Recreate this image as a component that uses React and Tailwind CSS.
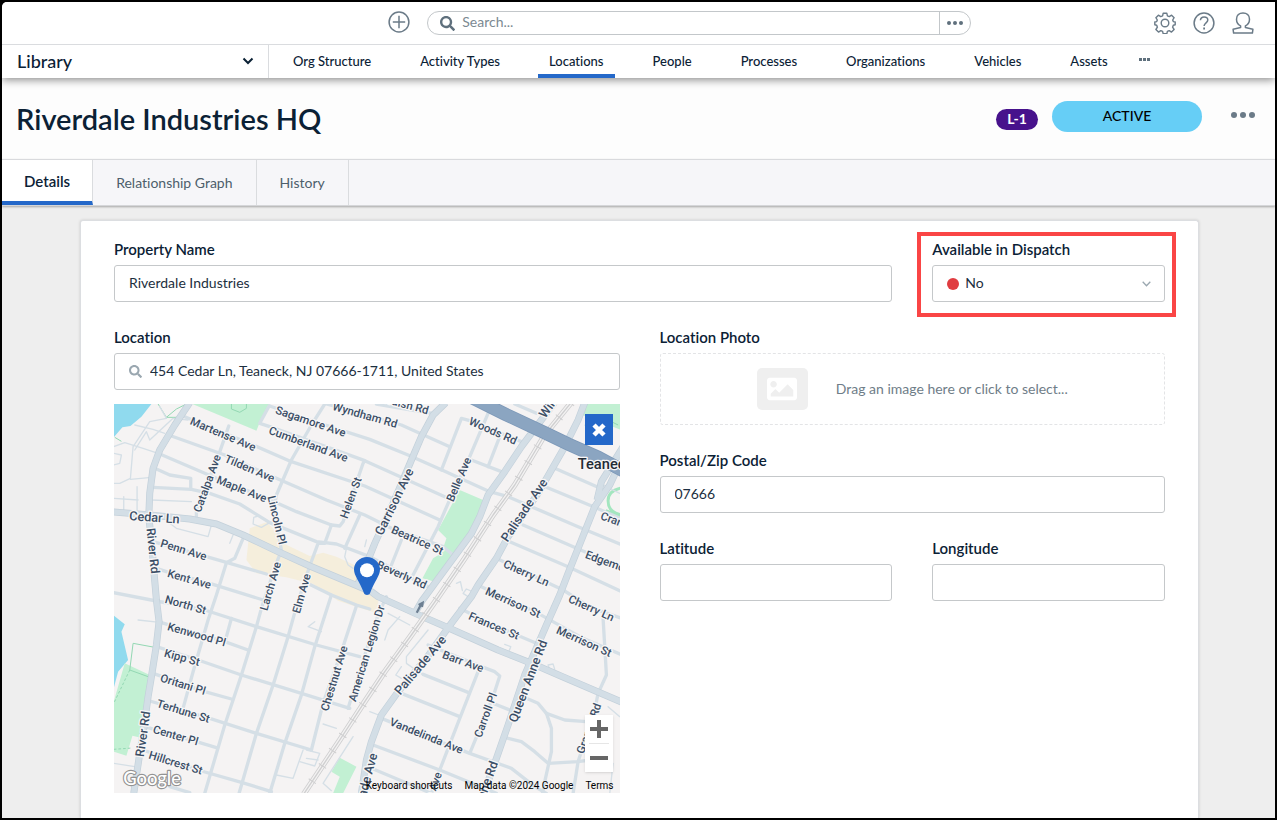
import { FaSearch, FaImage } from "react-icons/fa";

const NAV = [
  "Org Structure",
  "Activity Types",
  "Locations",
  "People",
  "Processes",
  "Organizations",
  "Vehicles",
  "Assets",
];

/* ---------- icons ---------- */

function PlusCircle() {
  return (
    <svg viewBox="0 0 22 22" className="size-[22px]" fill="none" stroke="currentColor" strokeWidth="1.5">
      <circle cx="11" cy="11" r="9.9" />
      <path d="M11 4.8v12.4M4.8 11h12.4" />
    </svg>
  );
}

function Gear() {
  return (
    <svg viewBox="0 0 22 22" className="size-[22px]" fill="none" stroke="currentColor" strokeWidth="1.4" strokeLinejoin="round">
      <circle cx="11" cy="11" r="3.8" />
      <path d="M9.2 1.2h3.6l.6 2.6 1.9.8 2.3-1.4 2.5 2.5-1.4 2.3.6 1.6 1.9.4v2.8l-1.9.5-.7 1.9 1.5 2.3-2.6 2.6-2.3-1.5-1.8.8-.6 2.4H9.2l-.6-2.4-1.8-.8-2.3 1.5-2.6-2.6 1.5-2.3-.7-1.9-1.9-.5V10l1.9-.4.6-1.6-1.4-2.3 2.5-2.5 2.3 1.4 1.9-.8z" />
    </svg>
  );
}

function Help() {
  return (
    <svg viewBox="0 0 22 22" className="size-[22px]" fill="none" stroke="currentColor" strokeWidth="1.5">
      <circle cx="11" cy="11" r="9.9" />
      <path d="M7.4 8.2c.2-2 1.700-3.200 3.700-3.200 2.100 0 3.700 1.300 3.700 3.100 0 2.700-3.700 2.900-3.700 6" />
      <path d="M11.1 15.5v2" strokeWidth="1.8" />
    </svg>
  );
}

function Person() {
  return (
    <svg viewBox="0 0 22 22" className="size-[22px]" fill="none" stroke="currentColor" strokeWidth="1.5" strokeLinejoin="round">
      <path d="M8.6 13.9C5.9 12.5 4.5 10 4.5 7.2 4.5 3.5 7.2.9 11 .9s6.5 2.6 6.5 6.3c0 2.8-1.4 5.3-4.1 6.7v1.7l7.500 1.700-.5 3.800H1.600l-.5-3.800 7.500-1.700z" />
    </svg>
  );
}

function Dots({ className }) {
  return (
    <svg viewBox="0 0 24 6" className={className} fill="currentColor">
      <circle cx="3" cy="3" r="3" />
      <circle cx="12" cy="3" r="3" />
      <circle cx="21" cy="3" r="3" />
    </svg>
  );
}

function Pin() {
  return (
    <svg viewBox="0 0 26 38" className="h-[38px] w-[26px]">
      <path
        fill="#2468c9"
        d="M13 0C5.8 0 0 5.6 0 12.6 0 19 5.5 24 10 36.3c.8 2.2 5.2 2.2 6 0C20.5 24 26 19 26 12.6 26 5.6 20.2 0 13 0z"
      />
      <circle cx="13" cy="13.2" r="7" fill="#fff" />
    </svg>
  );
}

/* ---------- map data (three drawing units per pixel) ---------- */

const MINOR = [
  "225,50 430,135 545,185 765,258 990,360",
  "480,18 600,60 780,118 895,165 1005,214 1140,275 1195,290 1265,320 1405,380 1530,432",
  "478,18 450,70 480,80 705,160 765,182 1005,290",
  "185,108 345,165 500,235 650,300 765,345 845,385 1000,440 1030,465",
  "145,160 320,235 470,295 560,335 665,375 690,378 700,365 760,190 765,182",
  "135,205 180,225 243,235 243,268",
  "130,262 245,268 300,280 390,312 480,368 620,425 680,432 780,470 955,560",
  "357,78 325,170 260,330 260,350",
  "645,12 605,75 545,180 500,285 492,330 515,450 500,490 455,625 440,680 395,825 345,975 285,1180",
  "665,375 645,430 625,430 600,498 560,620 535,710 490,855 440,1000 388,1180",
  "750,345 705,445",
  "400,415 375,475 350,488 320,585 295,660 250,815 220,925",
  "130,425 290,470 350,487 470,522",
  "140,505 170,515 300,550 470,603",
  "12,578 140,603 285,630 440,680 620,735 750,770",
  "145,665 345,725 415,750",
  "365,655 345,728",
  "140,740 265,780 395,825 575,880 720,925",
  "130,820 285,875 365,897",
  "120,903 300,955 440,1000 605,1050",
  "105,980 260,1025 320,1043",
  "100,1050 275,1113 395,1147 485,1175",
  "180,1160 240,1178",
  "590,548 665,585 740,615 780,627",
  "665,585 615,740 575,885 525,1030 480,1180",
  "740,618 690,770 640,910 605,1050",
  "830,590 805,645 770,750 715,925",
  "1135,40 1080,170 1015,310 985,380 910,525",
  "995,210 1055,55 1080,62 1235,125",
  "1170,110 1135,200",
  "1085,180 1175,215",
  "650,12 700,25 875,75 1020,140",
  "800,12 950,38 975,40",
  "875,420 845,495",
  "1215,12 1280,40",
  "1335,205 1465,262",
  "1310,262 1455,322 1530,355",
  "1240,375 1425,455 1530,500",
  "1200,425 1375,500 1530,572",
  "1160,475 1360,570 1442,622 1530,653",
  "1110,558 1285,640 1420,715 1530,762",
  "1050,625 1150,675 1285,732",
  "955,735 1115,800 1155,815 1170,828 1150,890",
  "1150,890 1080,1060",
  "1105,815 1050,955 990,1110 965,1180",
  "940,823 1075,877",
  "875,880 1050,950",
  "815,955 1080,1060 1205,1105 1275,1160 1310,1180",
  "790,1035 990,1110 1160,1180",
  "785,1105 960,1178",
  "1155,912 1205,932",
  "1250,895 1285,910 1310,940 1365,960 1430,965",
  "1310,940 1325,985 1325,1055 1305,1145 1298,1180",
  "1195,1015 1235,1025 1275,1055 1315,1090 1405,1085 1440,1080",
  "1480,655 1490,825 1465,880 1455,930 1405,1085 1390,1180",
];

const THIN = [
  "12,140 45,128 100,145 145,160",
  "150,20 170,55 120,65 70,140 62,235 30,250 12,250",
  "12,160 35,165 30,190 12,195",
  "75,75 130,88 165,100",
  "235,60 190,55 120,120 110,95 75,150",
  "42,290 42,330",
  "12,295 85,300",
  "82,260 82,330",
  "62,238 125,232",
  "125,300 245,305",
  "180,370 200,385 295,410 305,375",
  "370,405 360,430",
  "480,368 455,382 430,372 432,352 445,348",
  "710,445 705,470 715,495 730,505",
  "770,420 765,440",
  "85,660 150,667",
  "12,1090 75,1100",
  "615,665 595,680 635,695",
  "640,972 680,985",
  "580,1050 550,1135 500,1125",
  "570,1085 615,1098 630,1060 590,1050",
  "590,1075 625,1080",
  "730,1010 640,1150 665,1172",
  "1185,733 1203,740 1197,755",
  "1320,810 1315,795 1330,792 1335,808",
  "1088,575 1070,567 1060,580 1075,590",
  "1058,572 1052,545 1040,550",
  "955,690 890,770 890,790 940,825",
  "875,800 858,825 875,835",
  "780,935 815,948",
  "870,650 835,690 825,720",
  "835,640 900,675",
  "1470,250 1530,280",
  "1495,920 1530,950",
  "1510,1090 1500,1180",
];

const MAJOR = [
  "12,336 120,345 240,357 320,372 400,405 505,455 600,498 785,575 805,590 945,653 1015,683 1165,750 1265,790 1365,833 1540,908",
  "240,8 195,75 150,150 130,205 120,280 117,350 125,420 133,520 140,600 148,665 140,735 125,830 115,890 100,1000 90,1060 72,1180",
  "1008,8 970,45 935,110 905,180 850,310 795,430 775,480 742,558",
  "1334,8 1280,80 1235,140 1185,215 1135,285 1110,350 1085,400 1045,455 975,550 935,605 912,645",
  "1425,8 1405,60 1365,140 1325,210 1285,280 1195,410 1160,475 1105,555 1085,590 1015,683 950,775 865,875 815,945 785,1025 770,1080 755,1180",
  "1540,170 1500,255 1455,320 1415,420 1375,520 1350,585 1310,675 1245,825 1195,975 1160,1075 1120,1185",
  "1540,140 1475,245 1462,300",
];

const RAIL = "1384,8 1305,105 1215,255 1150,345 1065,475 985,592 905,705 825,815 765,905 690,1020 582,1182";
const HIGHWAY = "1085,-8 1185,42 1305,98 1375,132 1465,172 1540,212";

const LABELS = [
  [340, 102, 23, 34, "Martense Ave"],
  [603, 64, 19, 34, "Sagamore Ave"],
  [596, 132, 20, 34, "Cumberland Ave"],
  [766, 45, 16, 34, "Wyndham Rd"],
  [888, 13, 15, 34, "Walsh Rd"],
  [420, 205, 23, 34, "Tilden Ave"],
  [396, 267, 22, 34, "Maple Ave"],
  [292, 250, -70, 34, "Catalpa Ave"],
  [502, 360, 77, 34, "Lincoln Pl"],
  [723, 293, -70, 34, "Helen St"],
  [134, 352, 4, 38, "Cedar Ln"],
  [129, 452, 84, 37, "River Rd"],
  [222, 449, 17, 34, "Penn Ave"],
  [239, 537, 16, 34, "Kent Ave"],
  [228, 614, 16, 34, "North St"],
  [261, 703, 16, 34, "Kenwood Pl"],
  [217, 772, 15, 34, "Kipp St"],
  [220, 853, 17, 34, "Oritani Pl"],
  [221, 933, 17, 34, "Terhune St"],
  [198, 1006, 16, 34, "Center Pl"],
  [198, 1088, 17, 34, "Hillcrest St"],
  [100, 1002, -82, 37, "River Rd"],
  [482, 558, -74, 34, "Larch Ave"],
  [575, 580, -74, 34, "Elm Ave"],
  [673, 835, -73, 34, "Chestnut Ave"],
  [770, 760, -73, 34, "American Legion Dr"],
  [853, 305, -64, 38, "Garrison Ave"],
  [923, 420, 24, 34, "Beatrice St"],
  [876, 524, 24, 34, "Beverly Rd"],
  [1047, 238, -67, 34, "Belle Ave"],
  [1150, 92, 24, 34, "Woods Rd"],
  [1243, 330, -56, 38, "Palisade Ave"],
  [931, 795, -50, 38, "Palisade Ave"],
  [1254, 843, -69, 38, "Queen Anne Rd"],
  [1250, 519, 24, 34, "Cherry Ln"],
  [1445, 624, 24, 34, "Cherry Ln"],
  [1210, 607, 24, 34, "Merrison St"],
  [1423, 724, 24, 34, "Merrison St"],
  [1153, 677, 23, 34, "Frances St"],
  [1060, 784, 20, 34, "Barr Ave"],
  [950, 1007, 22, 34, "Vandelinda Ave"],
  [1127, 945, -70, 34, "Carroll Pl"],
  [1437, 985, -70, 34, "Grange Rd"],
  [1336, -8, -55, 38, "Windsor"],
  [1519, 495, 20, 34, "Edgemont Pl"],
  [1555, 375, 20, 34, "Cranford Pl"],
  [1108, 1207, -70, 38, "Queen Anne Rd"],
  [762, 1165, -75, 38, "Palisade Ave"],
  [965, 1175, -70, 34, "Elm Ave"],
];

function StreetMap() {
  return (
    <svg
      viewBox="12 12 1518 1167"
      preserveAspectRatio="xMidYMid slice"
      className="block h-[389px] w-full"
      role="img"
      aria-label="Street map"
    >
      <rect x="0" y="0" width="1560" height="1200" fill="#f5f3f3" />
      <g fill="#90daee">
        <path d="M12 12h113L95 50 62 78 38 82 12 112z" />
        <path d="M12 647l33 26-10 22 20 85-30 35-13 50z" />
      </g>
      <g fill="#c2f0d3">
        <path d="M248 12h230l-30 60-8 20z" />
        <path d="M1050 270l70 30-10 55-20 35-45 65-70 90-37-10 32-60 25-15 15-45-25-25z" />
        <path d="M1425 12h115v80l-130-50z" />
        <path d="M45 790l75 35-8 60-12 130-32-8-18 60-38-12V905z" />
        <path d="M690 1073l50 27-40 80h-30l20-50-25-15z" />
      </g>
      <path fill="#f5eedc" d="M420 385l50-18 25 23 25 40 80 38 40-10 40 12 60 28 45 72 22 18-4 52-60-18-58-20-75-50-80-20-90-12-30-40z" />
      <g fill="none" stroke="#93d8b3" strokeWidth="3">
        <path d="M145 12l25 40 40 0M170 52l30-25 30-15M15 112l20 12M60 810l10-80 65 12M60 810l55 20" />
        <path d="M365 12v15l25 10 20-12V12" />
        <path d="M1425 75l40-30 60 30" />
        <path strokeDasharray="8 6" d="M60 810L12 910M12 1048l55-4" />
      </g>
      <path fill="none" stroke="#a3e6bf" strokeWidth="9" d="M1545 262c-30 4-50 14-50 40 0 30 20 40 50 45M1488 332l50 20" />
      <g fill="none" stroke="#d5dfe6" strokeLinejoin="round" strokeLinecap="round">
        {THIN.map((p) => (
          <polyline key={p} points={p} strokeWidth="4" />
        ))}
        {MINOR.map((p) => (
          <polyline key={p} points={p} strokeWidth="10" />
        ))}
      </g>
      <g fill="none" strokeLinejoin="round">
        {MAJOR.map((p) => (
          <polyline key={p} points={p} stroke="#c3d0da" strokeWidth="21" />
        ))}
        {MAJOR.map((p) => (
          <polyline key={p} points={p} stroke="#d3dee6" strokeWidth="17" />
        ))}
      </g>
      <g fill="none" strokeLinejoin="round">
        <polyline points={RAIL} stroke="#cfcfd0" strokeWidth="17" />
        <polyline points={RAIL} stroke="#f3f2f2" strokeWidth="12" />
        <polyline points={RAIL} stroke="#cfcfd0" strokeWidth="4" />
        <polyline points={RAIL} stroke="#cfcfd0" strokeWidth="26" strokeDasharray="3 52" />
      </g>
      <polyline points={HIGHWAY} fill="none" stroke="#7c98b8" strokeWidth="40" />
      <polyline points={HIGHWAY} fill="none" stroke="#8ba5c1" strokeWidth="35" />
      <path fill="#6d7f92" d="M925 612l18-10-3 20-6-2-10 20-6-3 10-20z" />
      <g
        fill="#3b4e66"
        stroke="#f7f6f6"
        strokeWidth="8"
        strokeLinejoin="round"
        paintOrder="stroke"
        textAnchor="middle"
        dominantBaseline="central"
        className="font-['Roboto',sans-serif] font-medium"
      >
        {LABELS.map(([x, y, r, size, t], i) => (
          <text key={i} transform={`translate(${x} ${y}) rotate(${r})`} fontSize={size}>
            {t}
          </text>
        ))}
        <text x="1404" y="192" fontSize="44" fill="#232b35" textAnchor="start">
          Teaneck
        </text>
      </g>
      <text
        x="127"
        y="1156"
        fontSize="55"
        textAnchor="middle"
        fill="#fff"
        stroke="#939393"
        strokeWidth="7"
        paintOrder="stroke"
        strokeLinejoin="round"
        className="font-['Lato',sans-serif] font-medium"
      >
        Google
      </text>
    </svg>
  );
}

/* ---------- form pieces ---------- */

const LABEL = "block text-[15px] leading-5 font-semibold text-[#0b2135]";
const INPUT =
  "mt-[6px] block h-[37px] w-full rounded-[3px] border border-[#c5c8ca] bg-white px-[14px] pb-[2px] text-sm text-[#1c2f40] outline-none";

function TextField({ id, label, value, className = "" }) {
  return (
    <div className={className}>
      <label htmlFor={id} className={LABEL}>
        {label}
      </label>
      <input id={id} type="text" defaultValue={value} className={INPUT} />
    </div>
  );
}

function LocationField() {
  return (
    <div>
      <label htmlFor="location" className={LABEL}>
        Location
      </label>
      <div className="relative">
        <input
          id="location"
          type="text"
          defaultValue="454 Cedar Ln, Teaneck, NJ 07666-1711, United States"
          className="mt-[6px] block h-[37px] w-full rounded-[3px] border border-[#c5c8ca] bg-white pr-3 pb-[2px] pl-[35px] text-sm text-[#1c2f40] outline-none"
        />
        <FaSearch className="absolute top-3 left-[15px] size-[13px] text-[#9aa7b0]" />
      </div>
      <div className="relative mt-[14px] overflow-hidden">
        <StreetMap />
        <div className="absolute top-[153px] left-1/2 -translate-x-1/2">
          <Pin />
        </div>
        <button
          type="button"
          aria-label="Close map"
          className="absolute top-[10px] right-[7px] flex h-[31px] w-7 items-center justify-center bg-[#2468c9] text-white"
        >
          <svg viewBox="0 0 14 14" className="size-[14px]" stroke="currentColor" strokeWidth="4.5">
            <path d="M2 2l10 10M12 2L2 12" />
          </svg>
        </button>
        <div className="absolute right-[7px] bottom-[21px] flex w-7 flex-col bg-white text-[#666] shadow-sm">
          <button type="button" aria-label="Zoom in" className="flex h-7 items-center justify-center">
            <svg viewBox="0 0 18 18" className="size-[18px]" stroke="currentColor" strokeWidth="4">
              <path d="M9 0v18M0 9h18" />
            </svg>
          </button>
          <span className="mx-1 h-px bg-[#e6e6e6]" />
          <button type="button" aria-label="Zoom out" className="flex h-7 items-center justify-center">
            <svg viewBox="0 0 18 18" className="size-[18px]" stroke="currentColor" strokeWidth="4">
              <path d="M0 9h18" />
            </svg>
          </button>
        </div>
        <div className="absolute right-[6px] bottom-0 flex h-4 items-center gap-3 font-['Roboto',sans-serif] text-[10px] text-black">
          <button type="button">Keyboard shortcuts</button>
          <span>Map data ©2024 Google</span>
          <a href="#terms">Terms</a>
        </div>
      </div>
    </div>
  );
}

export default function App() {
  return (
    <div className="flex min-h-screen flex-col border-2 border-black bg-black font-['Lato','Open_Sans',sans-serif] text-[#0b2135] [font-variant-ligatures:none]">
      <div className="flex grow flex-col rounded-tl-[5px] bg-[#eeeeee]">
        <header className="relative z-10 rounded-tl-[5px] bg-white shadow-[0_2px_8px_rgba(0,0,0,0.45)]">
          <div className="grid h-[42px] grid-cols-[7fr_auto_5fr] items-center">
            <div className="flex justify-end pr-[17px] pb-[2px] text-[#6b7b88]">
              <button type="button" aria-label="Add">
                <PlusCircle />
              </button>
            </div>
            <div className="flex h-6 w-[544px] items-center rounded-full border border-[#c3c7ca]">
              <FaSearch className="ml-3 size-[15px] text-[#5f707d]" />
              <input
                type="text"
                aria-label="Search"
                placeholder="Search..."
                className="ml-[7px] min-w-0 grow bg-transparent pb-[2px] text-sm outline-none placeholder:text-[#7b8992]"
              />
              <button
                type="button"
                aria-label="Search options"
                className="flex h-full w-[31px] items-center justify-center border-l border-[#c3c7ca] text-[#5f707d]"
              >
                <Dots className="h-1 w-4" />
              </button>
            </div>
            <div className="flex justify-end gap-[17px] pr-[21px] text-[#6b7b88]">
              <button type="button" aria-label="Settings">
                <Gear />
              </button>
              <button type="button" aria-label="Help">
                <Help />
              </button>
              <button type="button" aria-label="Account">
                <Person />
              </button>
            </div>
          </div>
          <div className="flex h-[34px] border-t border-[#dadcdf]">
            <button
              type="button"
              className="flex w-[267px] items-center justify-between border-r border-[#dadcdf] pr-[14px] pb-[2px] pl-[15px] text-lg font-medium"
            >
              Library
              <svg viewBox="0 0 12 8" className="h-2 w-3" fill="none" stroke="currentColor" strokeWidth="2">
                <path d="M1.5 1.5L6 6l4.5-4.5" />
              </svg>
            </button>
            <nav className="flex gap-[27px] pl-[13px]">
              {NAV.map((n) => (
                <a
                  key={n}
                  href={"#" + n.toLowerCase().replace(" ", "-")}
                  aria-current={n === "Locations" ? "page" : undefined}
                  className={
                    n === "Locations"
                      ? "flex items-center border-b-4 border-[#2468c9] px-[11px] pt-1 text-[13px] font-medium"
                      : "flex items-center border-b-4 border-transparent px-[11px] pt-1 text-[13px] font-medium"
                  }
                >
                  {n}
                </a>
              ))}
              <button type="button" aria-label="More" className="-ml-[7px] pb-1 text-[#5f707d]">
                <svg viewBox="0 0 11 3" className="h-[3px] w-[11px]" fill="currentColor">
                  <path d="M0 0h3v3H0zM4 0h3v3H4zM8 0h3v3H8z" />
                </svg>
              </button>
            </nav>
          </div>
        </header>

        <div className="flex h-[81px] items-center justify-between bg-[#fdfdfd] pr-5 pl-[14px]">
          <h1 className="text-[29px] leading-9 font-semibold">Riverdale Industries HQ</h1>
          <div className="flex items-center pb-[5px]">
            <span className="mt-[6px] mr-[14px] flex h-[21px] w-[42px] items-center justify-center rounded-full bg-[#47128c] text-sm font-bold text-white">
              L-1
            </span>
            <button
              type="button"
              className="flex h-[31px] w-[150px] items-center justify-center rounded-full bg-[#66cef6] text-sm font-medium text-black"
            >
              ACTIVE
            </button>
            <button type="button" aria-label="More actions" className="ml-[29px] pb-[2px] text-[#6b7b88]">
              <Dots className="h-[6px] w-6" />
            </button>
          </div>
        </div>

        <div className="border-b border-[#d5d6d9] bg-[#f6f6f9] shadow-[0_1px_2px_rgba(0,0,0,0.3)]">
          <div role="tablist" className="flex h-[46px] border-t border-[#d9dadd] text-sm text-[#4d5e6b]">
            <button
              type="button"
              role="tab"
              aria-selected="true"
              className="border-r border-b-4 border-r-[#dadcdf] border-b-[#2468c9] bg-white px-[22px] pt-[3px] text-[15px] font-semibold text-[#0b2135]"
            >
              Details
            </button>
            <button type="button" role="tab" aria-selected="false" className="border-r border-[#dadcdf] px-[23px]">
              Relationship Graph
            </button>
            <button type="button" role="tab" aria-selected="false" className="border-r border-[#dadcdf] px-[23px]">
              History
            </button>
          </div>
        </div>

        <main className="flex grow flex-col pt-[14px] pr-[76px] pl-[78px]">
          <form className="grow rounded-t-[3px] border border-b-0 border-[#dcdee1] bg-white px-[33px] pt-[18px] pb-6 shadow-[0_0_3px_rgba(0,0,0,0.15)]">
            <div className="grid grid-cols-4 gap-x-10">
              <TextField id="property-name" label="Property Name" value="Riverdale Industries" className="col-span-3" />
              <div className="relative">
                <label htmlFor="dispatch" className={LABEL}>
                  Available in Dispatch
                </label>
                <div className="relative mt-[6px]">
                  <select
                    id="dispatch"
                    defaultValue="No"
                    className="block h-[37px] w-full appearance-none rounded-[3px] border border-[#c5c8ca] bg-white pb-[2px] pl-8 text-sm text-[#1c2f40] outline-none"
                  >
                    <option>Yes</option>
                    <option>No</option>
                  </select>
                  <span className="pointer-events-none absolute top-[13px] left-[15px] size-3 rounded-full bg-[#e03c40]" />
                  <svg
                    viewBox="0 0 9 6"
                    className="pointer-events-none absolute top-4 right-[14px] h-[6px] w-[9px]"
                    fill="none"
                    stroke="#9aa7b0"
                    strokeWidth="1.3"
                  >
                    <path d="M.7.8l3.8 4 3.8-4" />
                  </svg>
                </div>
                <div className="pointer-events-none absolute -top-[7px] -right-[11px] -bottom-[15px] -left-[15px] border-4 border-[#fa4545]" />
              </div>
            </div>

            <div className="mt-[25px] grid grid-cols-2 gap-x-10">
              <LocationField />
              <div className="flex flex-col gap-[25px]">
                <div>
                  <label htmlFor="photo" className={LABEL}>
                    Location Photo
                  </label>
                  <label
                    htmlFor="photo"
                    className="mt-[6px] flex h-[72px] items-center justify-center gap-7 rounded-[3px] border border-dashed border-[#e3e4e6] text-sm text-[#6f7d88]"
                  >
                    <span className="flex h-[42px] w-[51px] items-center justify-center rounded-[5px] bg-[#efefef] text-white">
                      <FaImage className="size-[30px]" />
                    </span>
                    Drag an image here or click to select...
                  </label>
                  <input id="photo" type="file" className="sr-only" />
                </div>
                <TextField id="zip" label="Postal/Zip Code" value="07666" />
                <div className="grid grid-cols-2 gap-x-10">
                  <TextField id="latitude" label="Latitude" value="" />
                  <TextField id="longitude" label="Longitude" value="" />
                </div>
              </div>
            </div>
          </form>
        </main>
      </div>
    </div>
  );
}
